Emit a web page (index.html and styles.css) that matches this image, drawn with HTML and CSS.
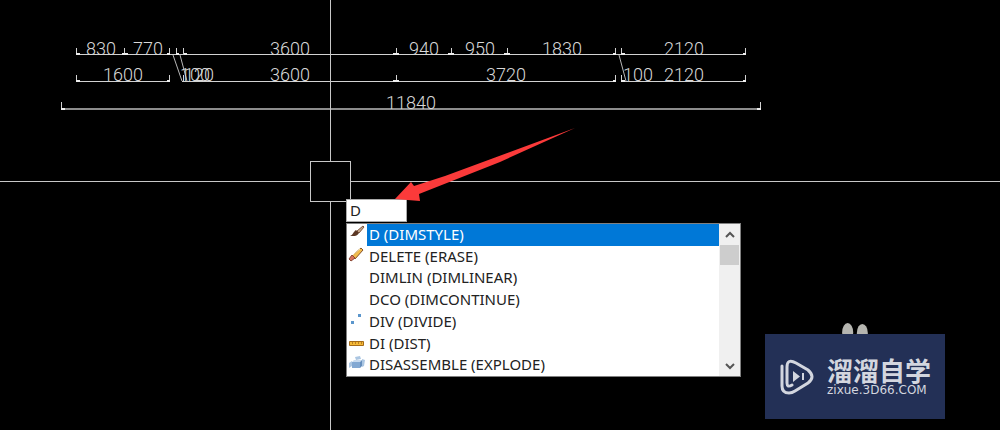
FILE: index.html
```html
<!DOCTYPE html>
<html lang="en">
<head>
<meta charset="utf-8">
<meta name="viewport" content="width=device-width, initial-scale=1">
<title>Command input</title>
<link rel="stylesheet" href="styles.css">
</head>
<body>
<main class="canvas">
  <svg class="drawing" aria-label="Dimension drawing">
    <g class="dim-line">
      <path d="M76 54.500H746M76 81.500H170M182 81.500H616M621 81.500H746"/>
      <path class="dim-total" d="M62 109H761"/>
      <path d="M76.500 48V54M124.500 48V54M169.500 48V54M176.500 48V54M183.500 48V54M396.500 48V54M451.500 48V54M507.500 48V54M615.500 48V54M621.500 48V54M745.500 48V54"/>
      <path d="M76.500 75V81M169.500 75V81M183.500 75V81M396.500 75V81M615.500 75V81M621.500 75V81M745.500 75V81M61.500 102V108M760.500 102V108"/>
      <path class="leader" d="M173 55L182 81M180 55L187 81M619 55L626 81"/>
      <path class="foot" d="M76 54H80M122 54H128M167 54H170M176 54H179M184 54H187M393 54H399M448 54H454M504 54H510M613 54H616M621 54H625M743 54H746M76 81H80M167 81H170M393 81H399M613 81H616M621 81H625M743 81H746M61 109H65M757 109H761"/>
    </g>
    <g class="dim-text">
      <text x="101" y="55">830</text>
      <text x="148" y="55">770</text>
      <text x="290" y="55">3600</text>
      <text x="424" y="55">940</text>
      <text x="480" y="55">950</text>
      <text x="562" y="55">1830</text>
      <text x="684" y="55">2120</text>
      <text x="123" y="81">1600</text>
      <text x="195" y="81">100</text>
      <text x="199" y="81">120</text>
      <text x="290" y="81">3600</text>
      <text x="506" y="81">3720</text>
      <text x="638" y="81">100</text>
      <text x="684" y="81">2120</text>
      <text x="411" y="109">11840</text>
    </g>
    <g class="crosshair">
      <path d="M330.500 0V162M330.500 202V2000M0 181.500H311M351 181.500H4000"/>
      <rect x="310.500" y="161.500" width="40" height="40"/>
    </g>
  </svg>

  <section class="command">
    <input class="command-input" type="text" value="D" aria-label="Command">
    <div class="suggest">
      <ul class="suggest-list">
        <li><button class="option selected" type="button">
          <svg class="icon" viewBox="0 0 18 18"><path d="M16 2L10 7l2 2 5-6z" fill="#c9a98b" stroke="#7d5842"/><path d="M9 6l3 3c-2 4-6 3-9 3 3-1 3-4 6-6z" fill="#5b3724"/></svg>
          <span>D (DIMSTYLE)</span></button></li>
        <li><button class="option" type="button">
          <svg class="icon" viewBox="0 0 18 18"><path d="M5 10L14 2l2 2-8 9z" fill="#f3bd4c" stroke="#84512a"/><path d="M6 9l7-6" stroke="#ffe6a0"/><path d="M5 9l3 3-4 3-2-2z" fill="#d9735b" stroke="#8c4735"/></svg>
          <span>DELETE (ERASE)</span></button></li>
        <li><button class="option" type="button"><span class="icon"></span><span>DIMLIN (DIMLINEAR)</span></button></li>
        <li><button class="option" type="button"><span class="icon"></span><span>DCO (DIMCONTINUE)</span></button></li>
        <li><button class="option" type="button">
          <svg class="icon" viewBox="0 0 18 18"><path d="M4 10h3v3H4zM11 3h3v3h-3z" fill="#5b96cc"/></svg>
          <span>DIV (DIVIDE)</span></button></li>
        <li><button class="option" type="button">
          <svg class="icon" viewBox="0 0 18 18"><path d="M2.500 8.500h14v4h-14z" fill="#f5b936" stroke="#a56b19"/><path d="M5.500 9v2M8.500 9v2M11.500 9v2M14.500 9v2" stroke="#b98028"/></svg>
          <span>DI (DIST)</span></button></li>
        <li><button class="option" type="button">
          <svg class="icon" viewBox="0 0 18 18"><path d="M5 8h8v6H5z" fill="#83a9d3"/><path d="M5 8l2-2h8l-2 2z" fill="#c8dbef"/><path d="M13 8l2-2v6l-2 2z" fill="#668fbd"/><path d="M2 9l3-2v5l-3 2zM8 3l5-1 1 3-5 1zM15 5l3 1-1 6-2 1z" fill="#abc6e2"/></svg>
          <span>DISASSEMBLE (EXPLODE)</span></button></li>
      </ul>
      <div class="scrollbar">
        <button class="scroll-button" type="button" aria-label="Scroll up"><svg viewBox="0 0 12 12"><path d="M2 8l4-4 4 4"/></svg></button>
        <div class="scroll-track"><div class="scroll-thumb"></div></div>
        <button class="scroll-button" type="button" aria-label="Scroll down"><svg viewBox="0 0 12 12"><path d="M2 4l4 4 4-4"/></svg></button>
      </div>
    </div>
  </section>

  <svg class="pointer" viewBox="0 0 180 74" aria-hidden="true"><path d="M0 72L16 55L19 59L50 49L180 1L105 35L24 67L25 74Z"/></svg>

  <aside class="brand">
    <svg class="brand-ears" viewBox="0 0 30 12" aria-hidden="true"><ellipse cx="7" cy="10" rx="6" ry="10"/><ellipse cx="23" cy="11" rx="6" ry="10"/></svg>
    <div class="brand-card">
      <svg class="brand-logo" viewBox="0 0 34 36" aria-hidden="true">
        <path d="M2 7V27Q2 34 9 34Q12 34 15 32L28 24Q36 18 28 11L16 4Q7 -1 7 8V24Q7 29 12 26"/>
        <path class="brand-play" d="M13 12L20 17.500L13 23ZM22 14H24V21H22Z"/>
      </svg>
      <div class="brand-words">
        <span class="brand-name" lang="zh">溜溜自学</span>
        <span class="brand-site">zixue.3D66.COM</span>
      </div>
    </div>
  </aside>
</main>
</body>
</html>
```
FILE: styles.css
```css
* { box-sizing: border-box; }
body { margin: 0; background: #000; }
button, input { font: inherit; border: 0; border-radius: 0; }

.canvas {
  position: relative;
  min-height: 100vh;
  overflow: hidden;
  font-family: "Noto Sans", "Open Sans", sans-serif;
  font-size: 15px;
}

.drawing { display: block; width: 100%; height: 100vh; }
.dim-line { fill: none; stroke: #d2d2d2; stroke-width: 1; }
.dim-total { stroke: #8c8c8c; stroke-width: 2; }
.leader { stroke: #b8b8b8; }
.foot { stroke: #eee; stroke-width: 2; }
.dim-text { fill: #d8d8d8; font-family: Roboto, sans-serif; font-size: 18px; font-weight: 300; text-anchor: middle; }
.crosshair { fill: none; stroke: #c8c8c8; stroke-width: 1; }

.command { position: absolute; left: 346px; top: 199px; width: 395px; }
.command-input {
  display: block;
  width: 61px;
  height: 23px;
  padding: 0 3px 2px;
  background: #fff;
  border: 1px solid #aaa;
  color: #222;
  outline: 0;
}
.suggest { display: flex; margin-top: 1px; border: 1px solid #808080; background: #fff; }
.suggest-list {
  flex: 1;
  display: grid;
  grid-auto-rows: 1fr;
  height: 152px;
  margin: 0;
  padding: 0;
  list-style: none;
}
.suggest-list li { display: flex; min-height: 0; }
.option {
  flex: 1;
  display: flex;
  align-items: stretch;
  padding: 0;
  background: none;
  color: #222;
  line-height: 21px;
  text-align: left;
}
.option .icon { flex: none; width: 18px; height: 18px; margin-right: 2px; fill: none; }
.option span:last-child { flex: 1; padding-left: 2px; }
.selected span:last-child { background: #0078d7; color: #fff; }

.scrollbar { display: flex; flex-direction: column; width: 21px; background: #f0f0f0; }
.scroll-button { display: grid; place-items: center; height: 21px; padding: 0; background: none; }
.scroll-button svg { width: 12px; height: 12px; fill: none; stroke: #555; stroke-width: 2; }
.scroll-track { flex: 1; }
.scroll-thumb { height: 20px; margin: 0 1px; background: #cdcdcd; }

.pointer { position: absolute; left: 395px; top: 127px; width: 180px; height: 74px; fill: #fb3a3a; pointer-events: none; }

.brand { position: absolute; right: 55px; bottom: 11px; width: 180px; }
.brand-ears { display: block; width: 30px; height: 11px; margin-left: 75px; fill: #b5b5b0; }
.brand-card { display: flex; align-items: center; gap: 13px; height: 85px; padding-left: 15px; background: #233056; }
.brand-logo { flex: none; width: 34px; height: 36px; fill: none; stroke: #d3d6df; stroke-width: 3; stroke-linecap: round; }
.brand-play { fill: #d3d6df; stroke: none; }
.brand-words { display: flex; flex-direction: column; color: #d3d6df; white-space: nowrap; }
.brand-name { font: 700 26px/26px "Noto Sans CJK SC", sans-serif; }
.brand-site { font: 12px/14px "DejaVu Sans", sans-serif; }
```
